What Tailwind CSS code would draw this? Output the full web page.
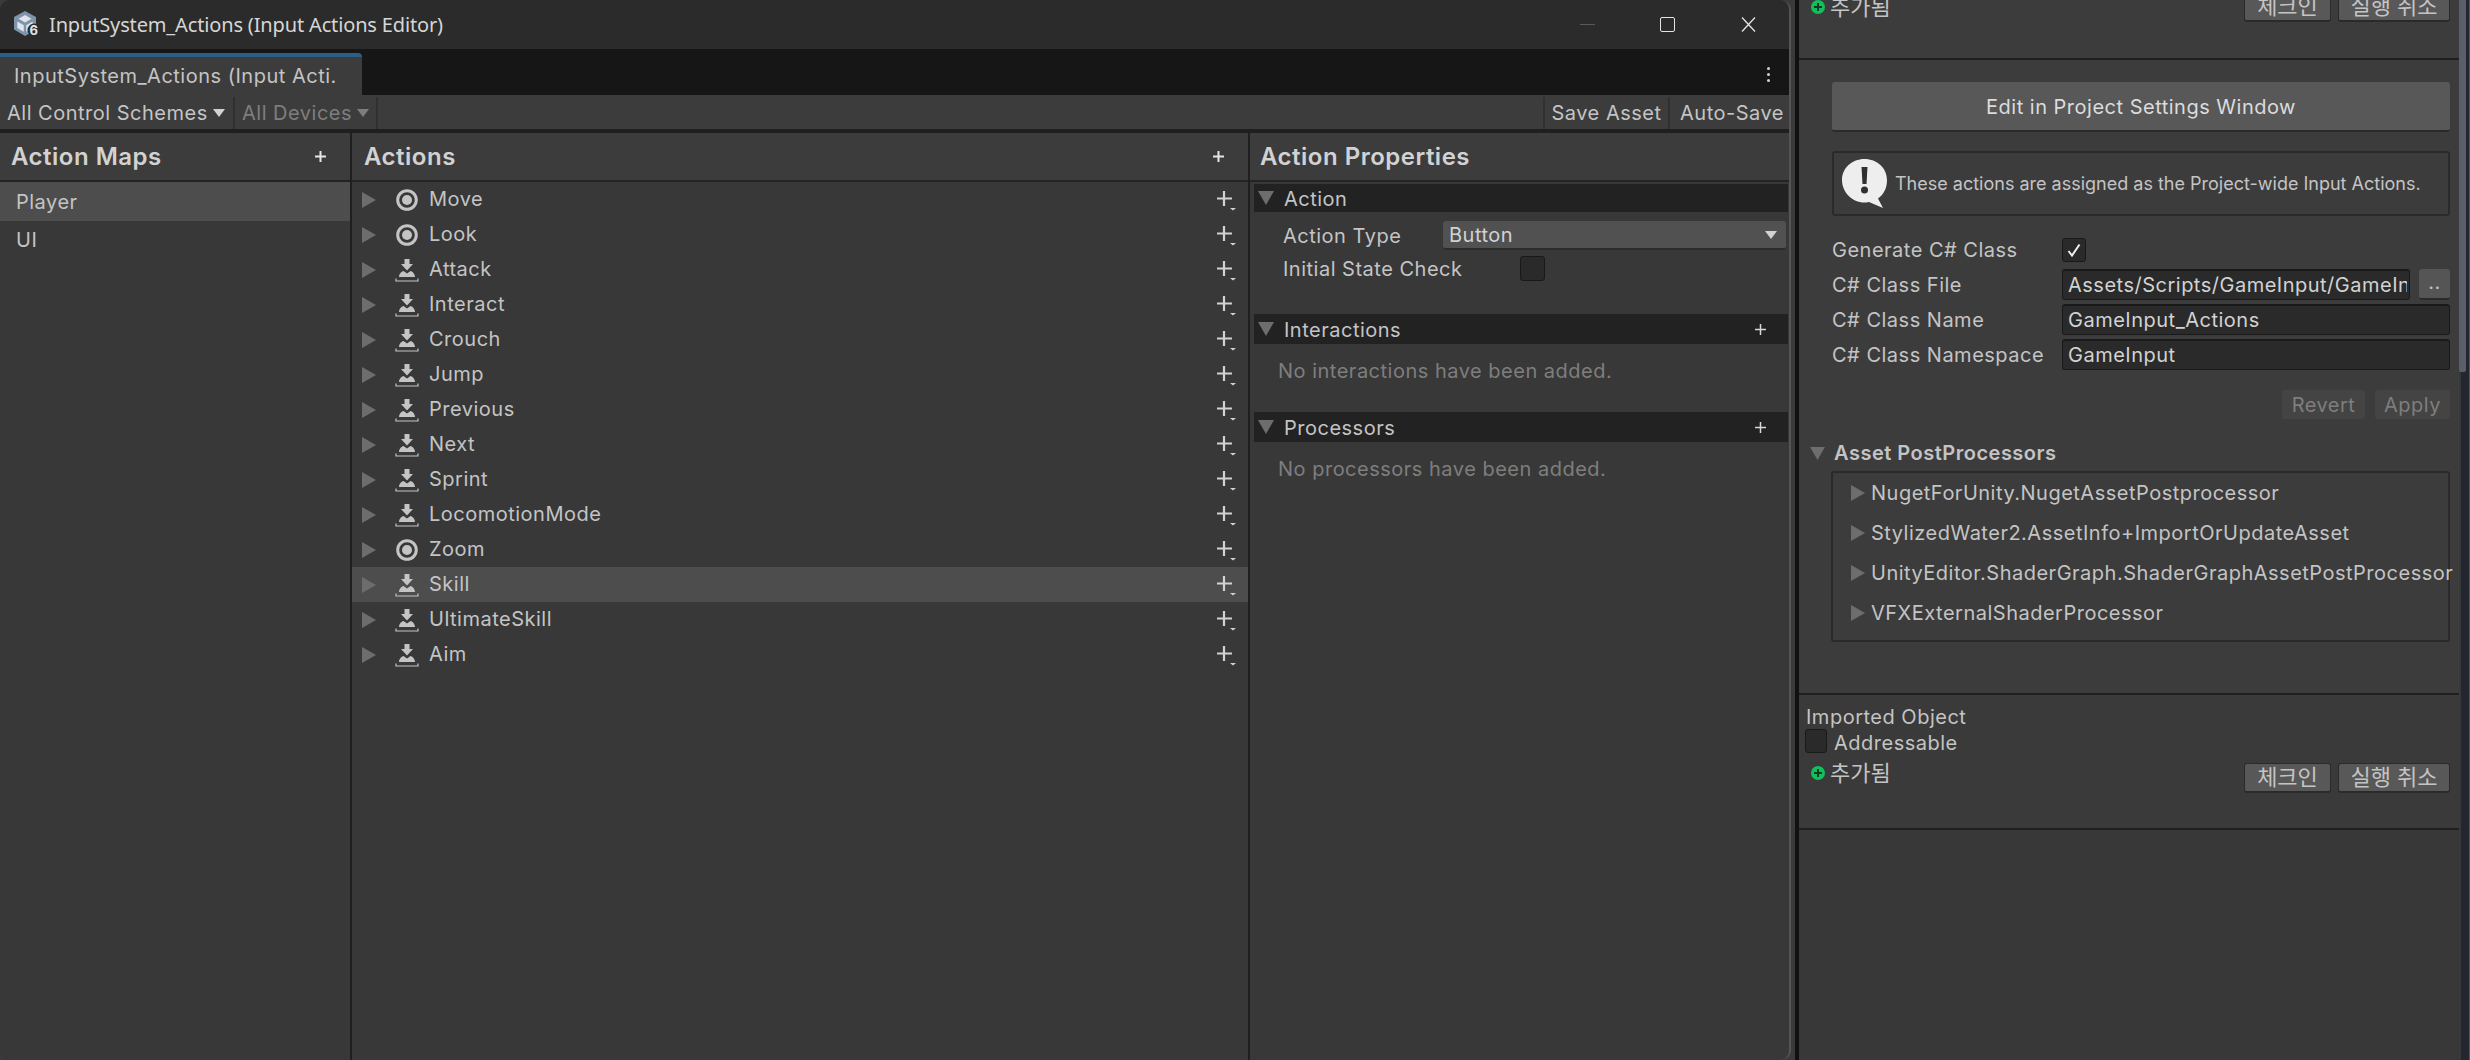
<!DOCTYPE html>
<html lang="en">
<head>
    <meta charset="UTF-8">
    <title>InputSystem_Actions (Input Actions Editor)</title>
    <script src="https://cdn.jsdelivr.net/npm/@tailwindcss/browser@4"></script>
</head>
<body class="h-screen overflow-hidden bg-[#111111] font-['Inter','Noto_Sans_CJK_KR',sans-serif] text-[20px] tracking-[0.5px] text-[#c4c4c4]">
    <!-- shared icons -->
    <svg class="hidden">
        <symbol id="icon-value" viewBox="0 0 22 22">
            <circle cx="11" cy="11" r="9.300" fill="none" stroke="#c4c4c4" stroke-width="3"/>
            <circle cx="11" cy="11" r="5" fill="#c4c4c4"/>
        </symbol>
        <symbol id="icon-button" viewBox="0 0 24 24">
            <path d="M9.500 1h5v5h3.500l-6 6.500-6-6.500h3.500z" fill="#c4c4c4"/>
            <path d="M4 19c0-3 2.500-5.500 4.500-6l3.500 2.500 3.500-2.500c2 .5 4.500 3 4.500 6z" fill="#c4c4c4"/>
            <path d="M1 20.500v2.500h22v-2.500" fill="none" stroke="#c4c4c4" stroke-width="1.200"/>
        </symbol>
        <symbol id="icon-add" viewBox="0 0 20 20">
            <path d="M7 0v15M0 7.500h15" stroke="#d2d2d2" stroke-width="2.200" fill="none"/>
            <path d="M13 17h6l-3 2.500z" fill="#d2d2d2"/>
        </symbol>
        <symbol id="tri-right" viewBox="0 0 14 16">
            <path d="M0 0l14 8-14 8z" fill="#6d6d6d"/>
        </symbol>
        <symbol id="tri-down" viewBox="0 0 16 14">
            <path d="M0 0h16l-8 14z" fill="#6d6d6d"/>
        </symbol>
        <symbol id="caret" viewBox="0 0 12 8">
            <path d="M0 0h12l-6 8z" fill="currentColor"/>
        </symbol>
        <symbol id="icon-added" viewBox="0 0 14 14">
            <circle cx="7" cy="7" r="7" fill="#0fc05c"/>
            <path d="M7 3v8M3 7h8" stroke="#123b22" stroke-width="2" fill="none"/>
        </symbol>
    </svg>

    <div class="flex h-full">
        <!-- editor window, on top of the grey window behind it -->
        <div class="h-full w-[1795px] shrink-0 bg-[#3a3a3a]">
        <div class="flex h-full w-[1791px] flex-col overflow-hidden rounded-[10px] border-r-2 border-[#555555] bg-[#383838]">
            <div class="flex h-[49px] shrink-0 items-center bg-[#2b2b2b]">
                <svg class="ml-[13px] h-[27px] w-[27px]" viewBox="0 0 27 27">
                    <path d="M12 0l11 6v12.500l-11 6.500-11-6.500v-12.500z" fill="#7f94ab"/>
                    <path d="M12 4l6.500 3.800-6.500 3.800-6.500-3.800zM4.300 10.500l6.500 3.800v6.500l-6.500-3.800zM19.700 10.500v6.500l-6.500 3.800v-6.500z" fill="#dfe5ea"/>
                    <circle cx="21" cy="19" r="6.500" fill="#2b2b2b"/>
                    <text x="21" y="24" text-anchor="middle" font-size="13" font-weight="700" fill="#dfe5ea" font-family="Inter">6</text>
                </svg>
                <span class="ml-[9px] font-['Noto_Sans',sans-serif] text-[20px] tracking-[-0.15px] text-[#d6d6d6]">InputSystem_Actions (Input Actions Editor)</span>
                <div class="ml-auto flex items-center">
                    <div class="h-px w-[15px] bg-[#5a5a5a]"></div>
                    <div class="ml-[65px] h-[15px] w-[15px] rounded-[2px] border-[1.5px] border-[#e4e4e4]"></div>
                    <svg class="ml-[66px] h-[15px] w-[15px]" viewBox="0 0 15 15"><path d="M1 .5l13 14M14 .5l-13 14" stroke="#e4e4e4" stroke-width="1.300" fill="none"/></svg>
                    <div class="w-[33px]"></div>
                </div>
            </div>

            <div class="flex h-[46px] shrink-0 items-end bg-[#161616]">
                <div class="flex h-[42px] w-[362px] items-center overflow-hidden rounded-tr-[4px] border-t-[4px] border-[#2c5d87] bg-[#3c3c3c] pl-[14px] whitespace-nowrap">InputSystem_Actions (Input Acti.</div>
                <div class="ml-auto flex h-[42px] items-center pr-[19px]">
                    <div class="flex flex-col gap-[3px]">
                        <div class="size-[3px] rounded-full bg-[#d2d2d2]"></div>
                        <div class="size-[3px] rounded-full bg-[#d2d2d2]"></div>
                        <div class="size-[3px] rounded-full bg-[#d2d2d2]"></div>
                    </div>
                </div>
            </div>

            <div class="flex h-[34px] shrink-0 items-center bg-[#3c3c3c] pt-[2px]">
                <div class="flex h-full w-[235px] items-center border-r-2 border-[#303030] pl-[7px]">
                    <span>All Control Schemes</span>
                    <svg class="ml-[5px] h-[8px] w-[12px] text-[#d2d2d2]"><use href="#caret"/></svg>
                </div>
                <div class="flex h-full w-[143px] items-center border-r-2 border-[#303030] pl-[7px] text-[#7e7e7e]">
                    <span>All Devices</span>
                    <svg class="ml-[5px] h-[8px] w-[12px] text-[#7e7e7e]"><use href="#caret"/></svg>
                </div>
                <div class="ml-auto flex h-full w-[127px] items-center justify-center border-x-2 border-[#303030]">Save Asset</div>
                <div class="flex h-full w-[119px] items-center pl-[10px] whitespace-nowrap">Auto-Save</div>
            </div>
            <div class="h-[4px] shrink-0 bg-[#1f1f1f]"></div>

            <div class="flex min-h-0 flex-1">
                <!-- action maps -->
                <div class="w-[352px] shrink-0 border-r-2 border-[#1f1f1f]">
                    <div class="flex h-[49px] items-center justify-between border-b-2 border-[#232323] bg-[#3c3c3c] pr-[24px] pl-[11px]">
                        <span class="text-[24px] font-semibold text-[#d2d2d2]">Action Maps</span>
                        <svg class="h-[11px] w-[11px]" viewBox="0 0 11 11"><path d="M5.500 0v11M0 5.500h11" stroke="#e6e6e6" stroke-width="2" fill="none"/></svg>
                    </div>
                    <div class="flex h-[39px] items-center bg-[#4d4d4d] pl-[16px]">Player</div>
                    <div class="flex h-[37px] items-center pl-[16px]">UI</div>
                </div>

                <!-- actions -->
                <div class="w-[898px] shrink-0 border-r-2 border-[#1f1f1f]">
                    <div class="flex h-[49px] items-center justify-between border-b-2 border-[#232323] bg-[#3c3c3c] pr-[24px] pl-[12px]">
                        <span class="text-[24px] font-semibold text-[#d2d2d2]">Actions</span>
                        <svg class="h-[11px] w-[11px]" viewBox="0 0 11 11"><path d="M5.500 0v11M0 5.500h11" stroke="#e6e6e6" stroke-width="2" fill="none"/></svg>
                    </div>
                    <div class="flex h-[35px] items-center"><svg class="ml-[10px] h-[16px] w-[14px]"><use href="#tri-right"/></svg><svg class="ml-[20px] size-[22px]"><use href="#icon-value"/></svg><span class="mb-[1px] ml-[11px]">Move</span><svg class="mt-[2px] mr-[11px] ml-auto size-[20px]"><use href="#icon-add"/></svg></div>
                    <div class="flex h-[35px] items-center"><svg class="ml-[10px] h-[16px] w-[14px]"><use href="#tri-right"/></svg><svg class="ml-[20px] size-[22px]"><use href="#icon-value"/></svg><span class="mb-[1px] ml-[11px]">Look</span><svg class="mt-[2px] mr-[11px] ml-auto size-[20px]"><use href="#icon-add"/></svg></div>
                    <div class="flex h-[35px] items-center"><svg class="ml-[10px] h-[16px] w-[14px]"><use href="#tri-right"/></svg><svg class="ml-[19px] size-[24px]"><use href="#icon-button"/></svg><span class="mb-[1px] ml-[10px]">Attack</span><svg class="mt-[2px] mr-[11px] ml-auto size-[20px]"><use href="#icon-add"/></svg></div>
                    <div class="flex h-[35px] items-center"><svg class="ml-[10px] h-[16px] w-[14px]"><use href="#tri-right"/></svg><svg class="ml-[19px] size-[24px]"><use href="#icon-button"/></svg><span class="mb-[1px] ml-[10px]">Interact</span><svg class="mt-[2px] mr-[11px] ml-auto size-[20px]"><use href="#icon-add"/></svg></div>
                    <div class="flex h-[35px] items-center"><svg class="ml-[10px] h-[16px] w-[14px]"><use href="#tri-right"/></svg><svg class="ml-[19px] size-[24px]"><use href="#icon-button"/></svg><span class="mb-[1px] ml-[10px]">Crouch</span><svg class="mt-[2px] mr-[11px] ml-auto size-[20px]"><use href="#icon-add"/></svg></div>
                    <div class="flex h-[35px] items-center"><svg class="ml-[10px] h-[16px] w-[14px]"><use href="#tri-right"/></svg><svg class="ml-[19px] size-[24px]"><use href="#icon-button"/></svg><span class="mb-[1px] ml-[10px]">Jump</span><svg class="mt-[2px] mr-[11px] ml-auto size-[20px]"><use href="#icon-add"/></svg></div>
                    <div class="flex h-[35px] items-center"><svg class="ml-[10px] h-[16px] w-[14px]"><use href="#tri-right"/></svg><svg class="ml-[19px] size-[24px]"><use href="#icon-button"/></svg><span class="mb-[1px] ml-[10px]">Previous</span><svg class="mt-[2px] mr-[11px] ml-auto size-[20px]"><use href="#icon-add"/></svg></div>
                    <div class="flex h-[35px] items-center"><svg class="ml-[10px] h-[16px] w-[14px]"><use href="#tri-right"/></svg><svg class="ml-[19px] size-[24px]"><use href="#icon-button"/></svg><span class="mb-[1px] ml-[10px]">Next</span><svg class="mt-[2px] mr-[11px] ml-auto size-[20px]"><use href="#icon-add"/></svg></div>
                    <div class="flex h-[35px] items-center"><svg class="ml-[10px] h-[16px] w-[14px]"><use href="#tri-right"/></svg><svg class="ml-[19px] size-[24px]"><use href="#icon-button"/></svg><span class="mb-[1px] ml-[10px]">Sprint</span><svg class="mt-[2px] mr-[11px] ml-auto size-[20px]"><use href="#icon-add"/></svg></div>
                    <div class="flex h-[35px] items-center"><svg class="ml-[10px] h-[16px] w-[14px]"><use href="#tri-right"/></svg><svg class="ml-[19px] size-[24px]"><use href="#icon-button"/></svg><span class="mb-[1px] ml-[10px]">LocomotionMode</span><svg class="mt-[2px] mr-[11px] ml-auto size-[20px]"><use href="#icon-add"/></svg></div>
                    <div class="flex h-[35px] items-center"><svg class="ml-[10px] h-[16px] w-[14px]"><use href="#tri-right"/></svg><svg class="ml-[20px] size-[22px]"><use href="#icon-value"/></svg><span class="mb-[1px] ml-[11px]">Zoom</span><svg class="mt-[2px] mr-[11px] ml-auto size-[20px]"><use href="#icon-add"/></svg></div>
                    <div class="flex h-[35px] items-center bg-[#4d4d4d]"><svg class="ml-[10px] h-[16px] w-[14px]"><use href="#tri-right"/></svg><svg class="ml-[19px] size-[24px]"><use href="#icon-button"/></svg><span class="mb-[1px] ml-[10px]">Skill</span><svg class="mt-[2px] mr-[11px] ml-auto size-[20px]"><use href="#icon-add"/></svg></div>
                    <div class="flex h-[35px] items-center"><svg class="ml-[10px] h-[16px] w-[14px]"><use href="#tri-right"/></svg><svg class="ml-[19px] size-[24px]"><use href="#icon-button"/></svg><span class="mb-[1px] ml-[10px]">UltimateSkill</span><svg class="mt-[2px] mr-[11px] ml-auto size-[20px]"><use href="#icon-add"/></svg></div>
                    <div class="flex h-[35px] items-center"><svg class="ml-[10px] h-[16px] w-[14px]"><use href="#tri-right"/></svg><svg class="ml-[19px] size-[24px]"><use href="#icon-button"/></svg><span class="mb-[1px] ml-[10px]">Aim</span><svg class="mt-[2px] mr-[11px] ml-auto size-[20px]"><use href="#icon-add"/></svg></div>
                </div>

                <!-- action properties -->
                <div class="min-w-0 flex-1">
                    <div class="flex h-[49px] items-center border-b-2 border-[#232323] bg-[#3c3c3c] pl-[10px]">
                        <span class="text-[24px] font-semibold text-[#d2d2d2]">Action Properties</span>
                    </div>
                    <div class="pt-[2px] pr-[1px] pl-[4px]">
                        <div class="flex h-[28px] items-center bg-[#222222]">
                            <svg class="ml-[4px] h-[14px] w-[16px]"><use href="#tri-down"/></svg>
                            <span class="mt-[1px] ml-[10px]">Action</span>
                        </div>
                        <div class="mt-[9px] flex h-[29px] items-center">
                            <span class="ml-[29px] w-[160px]">Action Type</span>
                            <div class="mr-[2px] flex h-[29px] flex-1 items-center rounded-[3px] border-b-2 border-[#2c2c2c] bg-[#515151] pr-[9px] pl-[6px] text-[#d2d2d2]">
                                <span>Button</span>
                                <svg class="ml-auto h-[8px] w-[12px] text-[#d2d2d2]"><use href="#caret"/></svg>
                            </div>
                        </div>
                        <div class="mt-[6px] flex h-[25px] items-center">
                            <span class="ml-[29px] w-[237px]">Initial State Check</span>
                            <div class="size-[25px] rounded-[3px] border border-[#191919] bg-[#2a2a2a]"></div>
                        </div>
                        <div class="mt-[33px] flex h-[30px] items-center bg-[#222222]">
                            <svg class="ml-[4px] h-[14px] w-[16px]"><use href="#tri-down"/></svg>
                            <span class="mt-[1px] ml-[10px]">Interactions</span>
                            <svg class="mr-[22px] ml-auto size-[11px]" viewBox="0 0 11 11"><path d="M5.500 0v11M0 5.500h11" stroke="#d8d8d8" stroke-width="1.500" fill="none"/></svg>
                        </div>
                        <div class="mt-[13px] flex h-[28px] items-center pl-[24px] text-[#7e7e7e]">No interactions have been added.</div>
                        <div class="mt-[27px] flex h-[30px] items-center bg-[#222222]">
                            <svg class="ml-[4px] h-[14px] w-[16px]"><use href="#tri-down"/></svg>
                            <span class="mt-[1px] ml-[10px]">Processors</span>
                            <svg class="mr-[22px] ml-auto size-[11px]" viewBox="0 0 11 11"><path d="M5.500 0v11M0 5.500h11" stroke="#d8d8d8" stroke-width="1.500" fill="none"/></svg>
                        </div>
                        <div class="mt-[13px] flex h-[28px] items-center pl-[24px] text-[#7e7e7e]">No processors have been added.</div>
                    </div>
                </div>
            </div>
        </div>
        </div>

        <!-- inspector -->
        <div class="ml-[4px] flex h-full min-w-0 flex-1">
            <div class="relative h-full w-[662px] shrink-0 bg-[#383838]">
                <!-- previous section, scrolled off the top -->
                <div class="flex h-[60px] w-[660px] items-start justify-between overflow-hidden border-b-2 border-[#1f1f1f] bg-[#3c3c3c] pr-[9px]">
                    <div class="mt-[-8px] ml-[12px] flex h-[30px] items-center">
                        <svg class="size-[14px]"><use href="#icon-added"/></svg>
                        <span class="ml-[5px] text-[22px] tracking-normal">추가됨</span>
                    </div>
                    <div class="mt-[-8px] flex gap-[7px] text-[22px] tracking-normal">
                        <div class="flex h-[30px] w-[87px] items-center justify-center rounded-[3px] border border-b-2 border-[#2a2a2a] bg-[#585858]">체크인</div>
                        <div class="flex h-[30px] w-[112px] items-center justify-center rounded-[3px] border border-b-2 border-[#2a2a2a] bg-[#585858]">실행 취소</div>
                    </div>
                </div>

                <div class="h-[635px] w-[660px] border-b-2 border-[#1f1f1f] bg-[#3c3c3c] pt-[22px] pr-[9px] pl-[33px]">
                    <div class="flex h-[50px] items-center justify-center rounded-[3px] border-b-2 border-[#2a2a2a] bg-[#585858] pt-[2px] text-[#dcdcdc]">Edit in Project Settings Window</div>
                    <div class="mt-[19px] flex h-[65px] items-center rounded-[3px] border-2 border-[#2a2a2a] pl-[8px]">
                        <svg class="h-[49px] w-[45px] shrink-0" viewBox="0 0 45 49">
                            <path d="M22.500 0c12.500 0 22.500 9 22.500 21 0 9-4 15-9 18.500l5 9.500-14-6c-2 .5-3 .5-4.500.5C10 43.500 0 33 0 21 0 9 10 0 22.500 0z" fill="#eeeeee"/>
                            <path d="M19.500 8h6l-1 17h-4z" fill="#303030"/>
                            <circle cx="22.500" cy="31" r="3.500" fill="#303030"/>
                        </svg>
                        <span class="ml-[8px] text-[18px] tracking-normal whitespace-nowrap">These actions are assigned as the Project-wide Input Actions.</span>
                    </div>

                    <div class="mt-[22px] flex h-[24px] items-center">
                        <span class="w-[230px] whitespace-nowrap">Generate C# Class</span>
                        <div class="flex size-[24px] items-center justify-center rounded-[3px] border border-[#191919] bg-[#2a2a2a]">
                            <svg class="h-[14px] w-[14px]" viewBox="0 0 14 14"><path d="M1.500 8l3.500 4.500 7.500-11" stroke="#f0f0f0" stroke-width="2" fill="none"/></svg>
                        </div>
                    </div>
                    <div class="mt-[7px] flex h-[31px] items-center">
                        <span class="w-[230px] whitespace-nowrap">C# Class File</span>
                        <div class="flex h-[31px] w-[348px] items-center rounded-[3px] border border-t-2 border-[#191919] bg-[#2a2a2a] pr-[2px] pl-[5px] text-[#d2d2d2]">
                            <span class="block overflow-hidden whitespace-nowrap">Assets/Scripts/GameInput/GameIn</span>
                        </div>
                        <div class="ml-[9px] flex h-[31px] w-[31px] items-start justify-center rounded-[3px] border-b-2 border-[#2a2a2a] bg-[#555555] leading-[26px]">..</div>
                    </div>
                    <div class="mt-[4px] flex h-[31px] items-center">
                        <span class="w-[230px] whitespace-nowrap">C# Class Name</span>
                        <div class="flex h-[31px] flex-1 items-center rounded-[3px] border border-t-2 border-[#191919] bg-[#2a2a2a] pl-[5px] text-[#d2d2d2]">GameInput_Actions</div>
                    </div>
                    <div class="mt-[4px] flex h-[31px] items-center">
                        <span class="w-[230px] whitespace-nowrap">C# Class Namespace</span>
                        <div class="flex h-[31px] flex-1 items-center rounded-[3px] border border-t-2 border-[#191919] bg-[#2a2a2a] pl-[5px] text-[#d2d2d2]">GameInput</div>
                    </div>
                    <div class="mt-[20px] flex justify-end gap-[10px] text-[#7e7e7e]">
                        <div class="flex h-[29px] w-[83px] items-center justify-center rounded-[3px] bg-[#444444]">Revert</div>
                        <div class="flex h-[29px] w-[75px] items-center justify-center rounded-[3px] bg-[#444444]">Apply</div>
                    </div>

                    <div class="mt-[23px] ml-[-22px] flex h-[22px] items-center">
                        <svg class="h-[13px] w-[15px]"><use href="#tri-down"/></svg>
                        <span class="ml-[9px] font-semibold">Asset PostProcessors</span>
                    </div>
                    <div class="mt-[7px] ml-[-1px] h-[171px] rounded-[3px] border-2 border-[#2a2a2a] pl-[18px]">
                        <div class="flex h-[40px] items-center whitespace-nowrap"><svg class="h-[16px] w-[14px] shrink-0"><use href="#tri-right"/></svg><span class="ml-[6px]">NugetForUnity.NugetAssetPostprocessor</span></div>
                        <div class="flex h-[40px] items-center whitespace-nowrap"><svg class="h-[16px] w-[14px] shrink-0"><use href="#tri-right"/></svg><span class="ml-[6px]">StylizedWater2.AssetInfo+ImportOrUpdateAsset</span></div>
                        <div class="flex h-[40px] items-center whitespace-nowrap"><svg class="h-[16px] w-[14px] shrink-0"><use href="#tri-right"/></svg><span class="ml-[6px]">UnityEditor.ShaderGraph.ShaderGraphAssetPostProcessor</span></div>
                        <div class="flex h-[40px] items-center whitespace-nowrap"><svg class="h-[16px] w-[14px] shrink-0"><use href="#tri-right"/></svg><span class="ml-[6px]">VFXExternalShaderProcessor</span></div>
                    </div>
                </div>

                <div class="h-[135px] w-[660px] border-b-2 border-[#1f1f1f] bg-[#3a3a3a] pt-[10px] pr-[9px]">
                    <div class="ml-[7px] flex h-[24px] items-center">Imported Object</div>
                    <div class="ml-[6px] flex h-[24px] items-center">
                        <div class="h-[24px] w-[22px] rounded-[3px] border border-[#191919] bg-[#2a2a2a]"></div>
                        <span class="mt-[3px] ml-[7px]">Addressable</span>
                    </div>
                    <div class="mt-[10px] flex items-start justify-between">
                        <div class="ml-[12px] flex h-[20px] items-center">
                            <svg class="size-[14px]"><use href="#icon-added"/></svg>
                            <span class="ml-[5px] text-[22px] tracking-normal">추가됨</span>
                        </div>
                        <div class="flex gap-[7px] text-[22px] tracking-normal">
                            <div class="flex h-[30px] w-[87px] items-center justify-center rounded-[3px] border border-b-2 border-[#2a2a2a] bg-[#585858]">체크인</div>
                            <div class="flex h-[30px] w-[112px] items-center justify-center rounded-[3px] border border-b-2 border-[#2a2a2a] bg-[#585858]">실행 취소</div>
                        </div>
                    </div>
                </div>

                <!-- scrollbar thumb -->
                <div class="absolute top-0 right-[-5px] h-[372px] w-[7px] rounded-b-[2px] bg-[#5a5f6b]"></div>
            </div>
            <div class="flex-1 border-r border-[#555555] bg-[#22262e]"></div>
        </div>
    </div>
</body>
</html>
